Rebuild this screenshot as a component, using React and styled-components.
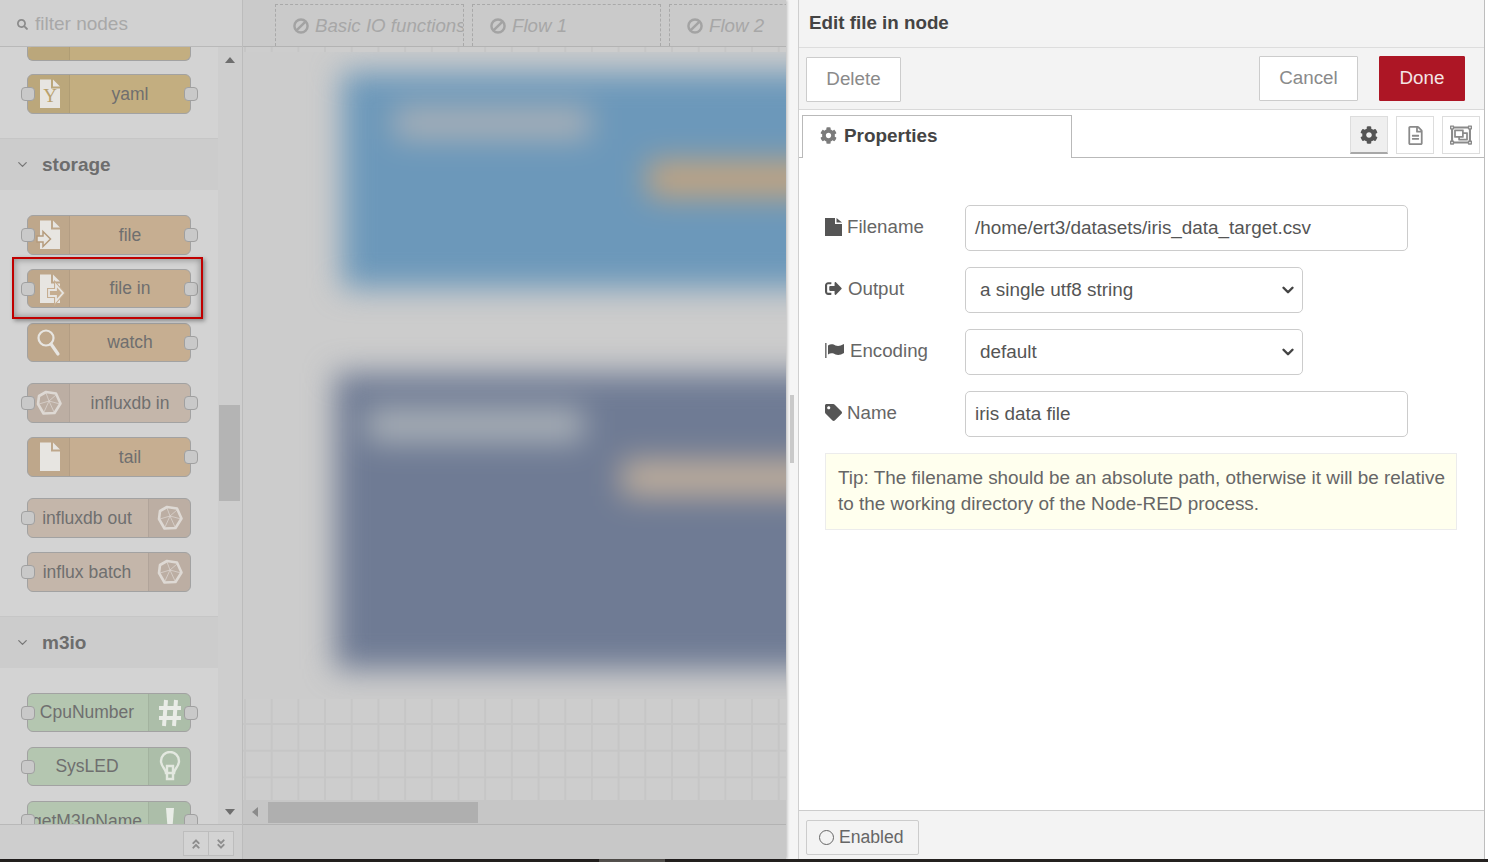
import React from 'react'
import styled, { createGlobalStyle } from 'styled-components'
import {
  FaSearch, FaCog, FaRegFileAlt, FaRegObjectGroup, FaSignOutAlt,
  FaTag, FaAngleDoubleUp, FaAngleDoubleDown,
} from 'react-icons/fa'
import { FiChevronDown } from 'react-icons/fi'

const GlobalStyle = createGlobalStyle`
  html, body { margin:0; padding:0; height:100%; overflow:hidden; background:#fff; }
  body { font-family:"Liberation Sans", Arial, sans-serif; }
  * { box-sizing:border-box; }
`

const Page = styled.div`
  width:1488px;
  height:862px;
  display:flex;
  flex-direction:column;
  overflow:hidden;
`
const Main = styled.div`
  flex:1;
  min-height:0;
  display:flex;
`
const TaskBar = styled.div`
  height:3px;
  display:flex;
  background:#24211f;
`
const TaskBarItem = styled.div`
  width:66px;
  margin-left:599px;
  background:#55524f;
`

/* dimmed editor on the left */
const Editor = styled.div`
  width:786px;
  display:flex;
  position:relative;
  box-shadow:1px 0 3px rgba(0,0,0,.25);
  z-index:1;
`
const Palette = styled.div`
  width:243px;
  display:flex;
  flex-direction:column;
  background:#cfcfcf;
  border-right:1px solid #bcbcbc;
  position:relative;
`
const FilterBar = styled.div`
  height:47px;
  flex:none;
  display:flex;
  align-items:center;
  gap:7px;
  padding:2px 0 0 17px;
  background:#d1d1d1;
  border-bottom:1px solid #b9b9b9;
  color:#a8a8a8;
  font-size:19px;
  svg { color:#8b8b8b; font-size:11px; }
`
const PaletteBody = styled.div`
  flex:1;
  min-height:0;
  display:flex;
`
const CategoryList = styled.div`
  width:218px;
  overflow:hidden;
  background:#cccccc;
`
const ScrollTrack = styled.div`
  flex:1;
  position:relative;
  background:#cecece;
  display:flex;
  flex-direction:column;
  align-items:center;
  justify-content:space-between;
  padding:10px 0 9px;
`
const ScrollThumb = styled.div`
  position:absolute;
  left:1px;
  top:358px;
  width:21px;
  height:96px;
  background:#b4b4b4;
`
const Arrow = styled.div`
  width:0;
  height:0;
  border-left:5px solid transparent;
  border-right:5px solid transparent;
  ${p => (p.$down ? 'border-top:6px solid #6e6e6e;' : 'border-bottom:6px solid #6e6e6e;')}
`
const CategoryHeader = styled.div`
  height:${p => p.$h}px;
  display:flex;
  align-items:center;
  gap:12px;
  padding-left:15px;
  background:#cccccc;
  color:#6d6d6d;
  font-size:19px;
  font-weight:bold;
  svg { font-size:15px; color:#777; }
`
const CategoryContent = styled.div`
  background:#d3d3d3;
  padding:${p => p.$pad};
  border-bottom:${p => (p.$line ? '1px solid #c6c6c6' : 'none')};
`
const Node = styled.div`
  position:relative;
  width:164px;
  height:${p => p.$h || 40}px;
  margin:${p => p.$mt || 0}px 0 0 27px;
  display:flex;
  flex-direction:${p => (p.$right ? 'row-reverse' : 'row')};
  background:${p => p.$color};
  border:1px solid #a2a2a2;
  border-radius:${p => (p.$cut ? '0 0 6px 6px' : '6px')};
  ${p => p.$cut && 'border-top:none;'}
`
const NodeIcon = styled.div`
  width:42px;
  flex:none;
  display:flex;
  align-items:center;
  justify-content:center;
  background:rgba(0,0,0,.04);
  ${p => (p.$right ? 'border-left' : 'border-right')}:1px solid rgba(0,0,0,.06);
  border-radius:${p => (p.$right ? '0 5px 5px 0' : '5px 0 0 5px')};
`
const NodeLabel = styled.div`
  flex:1;
  min-width:0;
  display:flex;
  align-items:center;
  justify-content:center;
  padding-right:${p => (p.$shift ? 2 : 0)}px;
  font-size:17.5px;
  color:#6f6f6f;
  white-space:nowrap;
  overflow:hidden;
`
const Port = styled.div`
  position:absolute;
  top:50%;
  margin-top:-7px;
  width:14px;
  height:14px;
  ${p => (p.$right ? 'right:-8px;' : 'left:-7px;')}
  background:#c9c9c9;
  border:1px solid #a0a0a0;
  border-radius:4px;
`
const Highlight = styled.div`
  position:absolute;
  left:12px;
  top:257px;
  width:191px;
  height:62px;
  border:2px solid #c00000;
  box-shadow:2px 2px 4px rgba(0,0,0,.35), inset 0 0 6px 1px rgba(0,0,0,.3);
`
const PaletteFooter = styled.div`
  height:35px;
  flex:none;
  display:flex;
  justify-content:flex-end;
  align-items:flex-start;
  padding:6px 8px 0 0;
  background:#cecece;
  border-top:1px solid #b9b9b9;
`
const FooterButton = styled.div`
  width:26px;
  height:25px;
  display:flex;
  align-items:center;
  justify-content:center;
  border:1px solid #bdbdbd;
  margin-left:-1px;
  background:#d3d3d3;
  color:#8d8d8d;
  font-size:12px;
`

const Workspace = styled.div`
  flex:1;
  min-width:0;
  display:flex;
  flex-direction:column;
  background:#cccccc;
`
const TabBar = styled.div`
  height:47px;
  flex:none;
  display:flex;
  gap:8px;
  padding:4px 0 0 32px;
  background:#cacaca;
  border-bottom:1px solid #b3b3b3;
  overflow:hidden;
`
const FlowTab = styled.div`
  width:189px;
  flex:none;
  display:flex;
  align-items:center;
  gap:6px;
  padding-left:17px;
  overflow:hidden;
  white-space:nowrap;
  border:1px dashed #a9a9a9;
  border-bottom:none;
  color:#a7a7a7;
  font-size:18.7px;
  font-style:italic;
  svg { flex:none; }
`
const Canvas = styled.div`
  flex:1;
  min-height:0;
  display:flex;
  flex-direction:column;
`
const BlurredArea = styled.div`
  height:647px;
  flex:none;
  overflow:hidden;
  background:#cccccc;
`
const BlurLayer = styled.div`
  filter:blur(15px);
  padding-top:20px;
`
const FlowGroup = styled.div`
  margin:${p => p.$margin};
  width:520px;
  height:${p => p.$h}px;
  background:${p => p.$color};
  display:flex;
  flex-direction:column;
`
const GroupTitle = styled.div`
  width:${p => p.$w}px;
  height:${p => p.$t}px;
  margin:${p => p.$margin};
  background:#a9b0b7;
`
const GroupNode = styled.div`
  height:36px;
  width:300px;
  margin:${p => p.$margin};
  background:${p => p.$color};
`
const Grid = styled.div`
  ${p => (p.$strip ? 'height:5px; flex:none;' : 'flex:1; min-height:0;')}
  background-color:#cdcdcd;
  background-image:
    linear-gradient(to right, #c6c6c6 1.5px, transparent 1.5px),
    linear-gradient(to bottom, #c6c6c6 1.5px, transparent 1.5px);
  background-size:26.7px 26.7px;
  background-position:1px ${p => (p.$strip ? 12 : 24)}px;
`
const HScroll = styled.div`
  height:24px;
  flex:none;
  display:flex;
  align-items:center;
  background:#c6c6c6;
  padding-left:9px;
`
const HArrow = styled.div`
  width:0;
  height:0;
  border-top:5px solid transparent;
  border-bottom:5px solid transparent;
  border-right:6px solid #8b8b8b;
`
const HThumb = styled.div`
  width:210px;
  height:21px;
  margin-left:10px;
  background:#afafaf;
`
const StatusBar = styled.div`
  height:35px;
  flex:none;
  background:#c8c8c8;
  border-top:1px solid #b3b3b3;
`

/* edit tray on the right */
const Gutter = styled.div`
  width:12px;
  flex:none;
  display:flex;
  align-items:center;
  justify-content:center;
  background:#f5f5f5;
`
const GutterHandle = styled.div`
  width:4px;
  height:68px;
  margin-top:-1px;
  background:#c9c9c9;
`
const Tray = styled.div`
  width:687px;
  flex:none;
  display:flex;
  flex-direction:column;
  background:#fff;
  border-left:1px solid #cfcfcf;
  border-right:1px solid #bdbdbd;
`
const TrayTitle = styled.div`
  height:48px;
  flex:none;
  display:flex;
  align-items:center;
  padding:0 0 2px 10px;
  background:#f3f3f3;
  border-bottom:1px solid #dddddd;
  color:#444;
  font-size:18.8px;
  font-weight:bold;
`
const TrayToolbar = styled.div`
  height:62px;
  flex:none;
  display:flex;
  align-items:flex-start;
  padding:8px 19px 0 7px;
  background:#f3f3f3;
  border-bottom:1px solid #d9d9d9;
`
const ToolButton = styled.div`
  width:${p => p.$w}px;
  height:45px;
  margin:${p => p.$margin || 0};
  padding-bottom:${p => p.$lift || 0}px;
  display:flex;
  align-items:center;
  justify-content:center;
  font-size:18.8px;
  color:${p => (p.$primary ? '#f4e4e5' : '#8a8a8a')};
  background:${p => (p.$primary ? '#ad1625' : '#fff')};
  border:1px solid ${p => (p.$primary ? '#ad1625' : '#cccccc')};
  border-radius:1px;
`
const TabsRow = styled.div`
  height:48px;
  flex:none;
  display:flex;
  justify-content:space-between;
  padding:5px 4px 0 3px;
  border-bottom:1px solid #b9b9b9;
`
const TabLabel = styled.div`
  width:270px;
  height:43px;
  display:flex;
  align-items:center;
  gap:7px;
  padding:0 0 3px 17px;
  background:#fff;
  border:1px solid #b9b9b9;
  border-bottom:none;
  color:#444;
  font-size:18.9px;
  font-weight:bold;
  margin-bottom:-1px;
  svg { color:#7b7b7b; font-size:17px; }
`
const TabButtons = styled.div`
  display:flex;
  gap:8px;
  padding-top:1px;
`
const TabButton = styled.div`
  width:38px;
  height:38px;
  display:flex;
  align-items:center;
  justify-content:center;
  font-size:${p => p.$size || 18}px;
  color:${p => (p.$active ? '#555' : '#8a8a8a')};
  background:${p => (p.$active ? '#efefef' : '#fff')};
  border:1px solid #dddddd;
  ${p => p.$active && 'border-bottom:2px solid #a8a8a8;'}
`
const TrayBody = styled.div`
  flex:1;
  min-height:0;
  display:flex;
  flex-direction:column;
  padding:47px 26px 0;
`
const FormRow = styled.div`
  display:flex;
  align-items:center;
  height:46px;
  margin-bottom:16px;
`
const FieldLabel = styled.label`
  width:140px;
  flex:none;
  display:flex;
  align-items:center;
  gap:${p => p.$gap || 5}px;
  margin-top:-3px;
  color:#666;
  font-size:18.7px;
  svg { color:#555; font-size:17px; flex:none; }
`
const TextInput = styled.div`
  width:443px;
  height:46px;
  display:flex;
  align-items:center;
  padding-left:9px;
  font-size:18.9px;
  color:#555;
  background:#fff;
  border:1px solid #cccccc;
  border-radius:5px;
`
const SelectBox = styled(TextInput)`
  width:338px;
  padding:0 5px 0 14px;
  justify-content:space-between;
  svg { font-size:18px; color:#444; stroke-width:3.2; }
`
const Tip = styled.div`
  width:632px;
  height:77px;
  padding:11px 10px 0 12px;
  background:#ffffee;
  border:1px solid #ececec;
  color:#666;
  font-size:18.9px;
  line-height:26px;
`
const TrayFooter = styled.div`
  height:49px;
  flex:none;
  padding:9px 0 0 7px;
  background:#f3f3f3;
  border-top:1px solid #cccccc;
`
const EnabledButton = styled.div`
  width:113px;
  height:35px;
  display:flex;
  align-items:center;
  gap:5px;
  padding-left:12px;
  background:#f3f3f3;
  border:1px solid #cccccc;
  border-radius:2px;
  color:#666;
  font-size:17.6px;
`
const Circle = styled.div`
  width:15px;
  height:15px;
  border:1.5px solid #666;
  border-radius:50%;
`
const EdgeGap = styled.div`
  flex:1;
  background:#fff;
`

const PAPER = '#e7e5e1'

const FileShape = ({ children }) => (
  <svg width="24" height="32" viewBox="0 0 24 32" style={{ overflow: 'visible' }}>
    <path d="M3 1.500h11v9h9v19.500H3z" fill={PAPER} />
    <path d="M16 1.500l7 7h-7z" fill={PAPER} />
    {children}
  </svg>
)
const FileOutIcon = () => (
  <FileShape>
    <path d="M0 17h6v-4.500l7.500 7.500-7.500 7.500V23H0z" fill={PAPER} stroke="#b59b7c" strokeWidth="1.500" />
  </FileShape>
)
const FileInIcon = () => (
  <FileShape>
    <path d="M12 17h7v-5l7 8-7 8v-5h-7z" fill="#c6ae91" stroke="#c6ae91" strokeWidth="4" />
    <path d="M12 17h7v-5l7 8-7 8v-5h-7z" fill="#c6ae91" stroke={PAPER} strokeWidth="1.800" />
  </FileShape>
)
const YamlIcon = () => (
  <FileShape>
    <text x="13" y="24" textAnchor="middle" fontSize="19" fontFamily="Liberation Serif, serif" fill="#b9a16d">Y</text>
  </FileShape>
)
const WatchIcon = () => (
  <svg width="26" height="32" viewBox="0 0 26 32">
    <circle cx="10" cy="11" r="7.500" fill="none" stroke={PAPER} strokeWidth="2.200" />
    <path d="M15 17l7 10" stroke={PAPER} strokeWidth="3.200" strokeLinecap="round" />
  </svg>
)
const InfluxIcon = () => (
  <svg width="26" height="26" viewBox="0 0 26 26" fill="none" stroke="#ded9d4" strokeLinejoin="round">
    <path d="M10 2l10 1.500 4.500 10-6 9.500-11 .5L2 14 3 6z" strokeWidth="2.600" />
    <path d="M10 3l3 8 7-6M13 11l5 11M13 11L3 14M13 11l-5 11M13 11l11 3" strokeWidth="1" opacity=".7" />
  </svg>
)
const HashIcon = () => (
  <svg width="24" height="32" viewBox="0 0 24 32" fill="none" stroke="#e9ece7" strokeWidth="4">
    <path d="M8 3L6 29M18 3l-2 26M1 11h22M1 21h22" />
  </svg>
)
const BulbIcon = () => (
  <svg width="22" height="32" viewBox="0 0 22 32" fill="none" stroke="#e3e8e0" strokeWidth="2.400">
    <path d="M7 22c0-4-5-6-5-12a9 9 0 0 1 18 0c0 6-5 8-5 12z" />
    <path d="M8 22v-7h6v7M8 22v6h6v-6" />
  </svg>
)
const BangIcon = () => (
  <svg width="10" height="32" viewBox="0 0 10 32">
    <path d="M1 3h8l-1.500 19h-5z" fill="#e9ece7" />
  </svg>
)
const BanIcon = () => (
  <svg width="16" height="16" viewBox="0 0 17 17" fill="none" stroke="#a3a3a3" strokeWidth="2.600">
    <circle cx="8.500" cy="8.500" r="7" />
    <path d="M4 13l9-9" />
  </svg>
)
const FileGlyph = () => (
  <svg width="17" height="18" viewBox="0 0 17 18" fill="#555">
    <path d="M0 0h10v6h7v12H0z" />
    <path d="M11.500 0L17 4.500h-5.500z" />
  </svg>
)
const FlagGlyph = () => (
  <svg width="19" height="15" viewBox="0 0 19 15" fill="#555">
    <rect x="0" y="0" width="1.600" height="15" fill="#777" />
    <path d="M3 2.500c3-2 5.500-1 7.500 0 2.500 1 5 .5 8.500-1.500v9c-3 2-6 2.500-8.500 1.500-2-1-4.500-2-7.500 0z" />
  </svg>
)

const TAN = '#c6ae91'
const YELLOW = '#c3ae80'
const BROWN = '#c4b6aa'
const GREEN = '#b4c6b0'

const App = () => {
  return (
    <Page>
      <GlobalStyle />
      <Main>
        <Editor>
          <Palette>
            <FilterBar><FaSearch />filter nodes</FilterBar>
            <PaletteBody>
              <CategoryList>
                <CategoryContent $pad="0 0 24px" $line>
                  <Node $color={YELLOW} $h={14} $cut>
                    <NodeIcon />
                    <NodeLabel />
                  </Node>
                  <Node $color={YELLOW} $mt={13}>
                    <NodeIcon><YamlIcon /></NodeIcon>
                    <NodeLabel>yaml</NodeLabel>
                    <Port />
                    <Port $right />
                  </Node>
                </CategoryContent>
                <CategoryHeader $h={51}><FiChevronDown />storage</CategoryHeader>
                <CategoryContent $pad="25px 0 24px" $line>
                  <Node $color={TAN}>
                    <NodeIcon><FileOutIcon /></NodeIcon>
                    <NodeLabel>file</NodeLabel>
                    <Port />
                    <Port $right />
                  </Node>
                  <Node $color={TAN} $mt={14} $h={39}>
                    <NodeIcon><FileInIcon /></NodeIcon>
                    <NodeLabel>file in</NodeLabel>
                    <Port />
                    <Port $right />
                  </Node>
                  <Node $color={TAN} $mt={15} $h={39}>
                    <NodeIcon><WatchIcon /></NodeIcon>
                    <NodeLabel>watch</NodeLabel>
                    <Port $right />
                  </Node>
                  <Node $color={BROWN} $mt={21}>
                    <NodeIcon><InfluxIcon /></NodeIcon>
                    <NodeLabel>influxdb in</NodeLabel>
                    <Port />
                    <Port $right />
                  </Node>
                  <Node $color={TAN} $mt={14}>
                    <NodeIcon><FileShape /></NodeIcon>
                    <NodeLabel>tail</NodeLabel>
                    <Port $right />
                  </Node>
                  <Node $color={BROWN} $mt={21} $right>
                    <NodeIcon $right><InfluxIcon /></NodeIcon>
                    <NodeLabel $shift>influxdb out</NodeLabel>
                    <Port />
                  </Node>
                  <Node $color={BROWN} $mt={14} $right>
                    <NodeIcon $right><InfluxIcon /></NodeIcon>
                    <NodeLabel $shift>influx batch</NodeLabel>
                    <Port />
                  </Node>
                </CategoryContent>
                <CategoryHeader $h={51}><FiChevronDown />m3io</CategoryHeader>
                <CategoryContent $pad="25px 0 0">
                  <Node $color={GREEN} $h={39} $right>
                    <NodeIcon $right><HashIcon /></NodeIcon>
                    <NodeLabel $shift>CpuNumber</NodeLabel>
                    <Port />
                    <Port $right />
                  </Node>
                  <Node $color={GREEN} $mt={15} $h={39} $right>
                    <NodeIcon $right><BulbIcon /></NodeIcon>
                    <NodeLabel $shift>SysLED</NodeLabel>
                    <Port />
                  </Node>
                  <Node $color={GREEN} $mt={15} $right>
                    <NodeIcon $right><BangIcon /></NodeIcon>
                    <NodeLabel $shift>getM3IoName</NodeLabel>
                    <Port />
                    <Port $right />
                  </Node>
                </CategoryContent>
              </CategoryList>
              <ScrollTrack>
                <Arrow />
                <ScrollThumb />
                <Arrow $down />
              </ScrollTrack>
            </PaletteBody>
            <PaletteFooter>
              <FooterButton><FaAngleDoubleUp /></FooterButton>
              <FooterButton><FaAngleDoubleDown /></FooterButton>
            </PaletteFooter>
            <Highlight />
          </Palette>
          <Workspace>
            <TabBar>
              <FlowTab><BanIcon />Basic IO functions</FlowTab>
              <FlowTab><BanIcon />Flow 1</FlowTab>
              <FlowTab><BanIcon />Flow 2</FlowTab>
            </TabBar>
            <Canvas>
              <Grid $strip />
              <BlurredArea>
                <BlurLayer>
                  <FlowGroup $color="#6c98ba" $h={216} $margin="0 0 0 99px">
                    <GroupTitle $w={196} $t={32} $margin="35px 0 0 52px" />
                    <GroupNode $color="#c4a47f" $margin="22px 0 0 306px" />
                  </FlowGroup>
                  <FlowGroup $color="#6f7b94" $h={296} $margin="85px 0 0 92px">
                    <GroupTitle $w={216} $t={34} $margin="35px 0 0 32px" />
                    <GroupNode $color="#bfae9c" $margin="18px 0 0 287px" />
                  </FlowGroup>
                </BlurLayer>
              </BlurredArea>
              <Grid />
              <HScroll>
                <HArrow />
                <HThumb />
              </HScroll>
            </Canvas>
            <StatusBar />
          </Workspace>
        </Editor>
        <Gutter><GutterHandle /></Gutter>
        <Tray>
          <TrayTitle>Edit file in node</TrayTitle>
          <TrayToolbar>
            <ToolButton $w={95} $margin="1px 0 0" $lift={1}>Delete</ToolButton>
            <ToolButton $w={99} $margin="0 0 0 auto" $lift={2}>Cancel</ToolButton>
            <ToolButton $w={86} $margin="0 0 0 21px" $lift={2} $primary>Done</ToolButton>
          </TrayToolbar>
          <TabsRow>
            <TabLabel><FaCog />Properties</TabLabel>
            <TabButtons>
              <TabButton $active><FaCog /></TabButton>
              <TabButton $size={19}><FaRegFileAlt /></TabButton>
              <TabButton $size={22}><FaRegObjectGroup /></TabButton>
            </TabButtons>
          </TabsRow>
          <TrayBody>
            <FormRow>
              <FieldLabel><FileGlyph />Filename</FieldLabel>
              <TextInput>/home/ert3/datasets/iris_data_target.csv</TextInput>
            </FormRow>
            <FormRow>
              <FieldLabel $gap={6}><FaSignOutAlt />Output</FieldLabel>
              <SelectBox>a single utf8 string<FiChevronDown /></SelectBox>
            </FormRow>
            <FormRow>
              <FieldLabel $gap={6}><FlagGlyph />Encoding</FieldLabel>
              <SelectBox>default<FiChevronDown /></SelectBox>
            </FormRow>
            <FormRow>
              <FieldLabel><FaTag />Name</FieldLabel>
              <TextInput>iris data file</TextInput>
            </FormRow>
            <Tip>Tip: The filename should be an absolute path, otherwise it will be relative to the working directory of the Node-RED process.</Tip>
          </TrayBody>
          <TrayFooter>
            <EnabledButton><Circle />Enabled</EnabledButton>
          </TrayFooter>
        </Tray>
        <EdgeGap />
      </Main>
      <TaskBar><TaskBarItem /></TaskBar>
    </Page>
  )
}

export default App
